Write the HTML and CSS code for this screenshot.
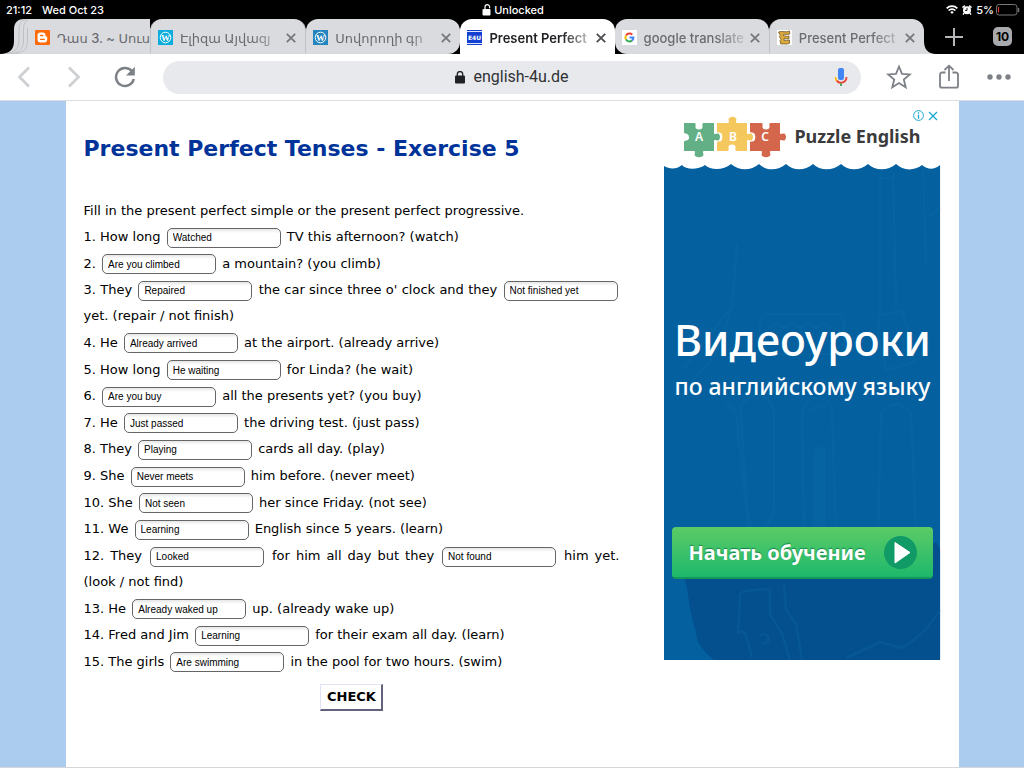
FILE: index.html
```html
<!DOCTYPE html>
<html lang="en">
<head>
<meta charset="utf-8">
<meta name="viewport" content="width=device-width, initial-scale=1">
<title>Present Perfect Tenses - Exercise 5</title>
<link rel="stylesheet" href="styles.css">
</head>
<body>
<div class="status">
  <div class="status-left"><span>21:12</span><span>Wed Oct 23</span></div>
  <div class="status-mid">
    <svg width="9" height="12" viewBox="0 0 9 12"><rect x="0.5" y="5" width="8" height="6.5" rx="1" fill="#fff"/><path d="M3 5V3a2.300 2.300 0 0 1 4.600 0V4.200" fill="none" stroke="#fff" stroke-width="1.2"/></svg>
    <span>Unlocked</span>
  </div>
  <div class="status-right">
    <svg width="12" height="9" viewBox="0 0 12 9"><g fill="none" stroke="#fff" stroke-width="1.6"><path d="M0.6 3.4a7.6 7.6 0 0 1 10.8 0"/><path d="M2.6 5.5a4.8 4.8 0 0 1 6.8 0"/></g><path d="M4.2 7a2.6 2.6 0 0 1 3.6 0L6 9z" fill="#fff"/></svg>
    <svg width="10" height="10" viewBox="0 0 10 10"><circle cx="5" cy="5.2" r="4" fill="#fff"/><path d="M0.5 2.6L2.8.6M9.5 2.6L7.2.6M2 8.2L1 9.6M8 8.2l1 1.4" stroke="#fff" stroke-width="1.4"/><path d="M5 2.8v2.6H3" fill="none" stroke="#000" stroke-width=".9"/></svg>
    <span class="charge">5%</span>
    <svg width="24" height="12" viewBox="0 0 24 12"><rect x=".5" y=".5" width="20.5" height="10.5" rx="2.6" fill="none" stroke="#777"/><path d="M2.5 3v5.5" stroke="#e0392b" stroke-width="1.2"/><path d="M22.5 4v4" stroke="#777" stroke-width="1.4"/></svg>
  </div>
</div>

<div class="strip">
  <svg class="stack" width="28" height="35" viewBox="0 0 28 35"><path d="M0 35C10 35 14 30 14 22V11C14 4 17 0 24 0H28V35z" fill="#dadbdf"/><g fill="none" stroke="#bfc0c4"><path d="M5 35C14 34 19 30 19 22V11C19 5 21 1 26 .5"/><path d="M10 35C19 34 23.500 30 23.500 22V11C23.500 5 25 2 28 1"/><path d="M15 35C23 34 27.500 30 27.500 22V9"/></g></svg>
  <div class="tab tab-first">
    <svg width="15" height="15" viewBox="0 0 15 15"><rect width="15" height="15" rx="1" fill="#ff6a0b"/><path d="M5.500 2.500h2.300a2.700 2.700 0 0 1 2.700 2.700c0 1 .3 1.300 1 1.400.5 0 .7.300.7.700v2.200a3 3 0 0 1-3 3H5.500a3 3 0 0 1-3-3V5.500a3 3 0 0 1 3-3z" fill="#fff"/><path d="M5.500 5.500h2.300M5.500 9.400h3.800" stroke="#ff6a0b" stroke-width="1.300" stroke-linecap="round"/></svg>
    <button class="tab-title">Դաս 3. ~ Սուս</button>
  </div>
  <div class="tab tab-edge">
    <svg width="15" height="15" viewBox="0 0 15 15"><rect width="15" height="15" fill="#0badde"/><circle cx="7.500" cy="7.500" r="5.300" fill="none" stroke="#fff"/><text x="7.500" y="10.500" font-family="Liberation Serif,serif" font-weight="bold" font-size="9" text-anchor="middle" fill="#fff">W</text></svg>
    <button class="tab-title">Էլիզա Այվազյ</button>
    <button class="close" aria-label="Close tab"><svg width="10" height="10" viewBox="0 0 10 10"><path d="M.8.800l8.400 8.400M9.200.800L.8 9.200"/></svg></button>
  </div>
  <div class="tab tab-before">
    <svg width="15" height="15" viewBox="0 0 15 15"><rect width="15" height="15" fill="#2384c0"/><circle cx="7.500" cy="7.500" r="5.300" fill="none" stroke="#fff"/><text x="7.500" y="10.500" font-family="Liberation Serif,serif" font-weight="bold" font-size="9" text-anchor="middle" fill="#fff">W</text></svg>
    <button class="tab-title">Սովորողի գր</button>
    <button class="close" aria-label="Close tab"><svg width="10" height="10" viewBox="0 0 10 10"><path d="M.8.800l8.400 8.400M9.200.800L.8 9.200"/></svg></button>
  </div>
  <div class="tab tab-active">
    <svg width="15" height="15" viewBox="0 0 15 15"><rect width="15" height="15" fill="#1440d2"/><path d="M0 1.500h15M0 13.500h15" stroke="#dfe6fb"/><text x="7.500" y="9.800" font-family="DejaVu Sans,sans-serif" font-weight="bold" font-size="6" text-anchor="middle" fill="#fff">E4U</text></svg>
    <button class="tab-title">Present Perfect</button>
    <button class="close" aria-label="Close tab"><svg width="10" height="10" viewBox="0 0 10 10"><path d="M.8.800l8.400 8.400M9.200.800L.8 9.200"/></svg></button>
  </div>
  <div class="tab tab-after">
    <svg width="15" height="15" viewBox="0 0 15 15"><rect width="15" height="15" fill="#fff"/><g fill="none" stroke-width="2"><path d="M10.300 4.600A4 4 0 0 0 4 5.500" stroke="#ea4335"/><path d="M4 5.500a4 4 0 0 0 0 4" stroke="#fbbc05"/><path d="M4 9.500a4 4 0 0 0 6 1" stroke="#34a853"/><path d="M10 10.500a4 4 0 0 0 1.400-2.900H7.500" stroke="#4285f4"/></g></svg>
    <button class="tab-title">google translate</button>
    <button class="close" aria-label="Close tab"><svg width="10" height="10" viewBox="0 0 10 10"><path d="M.8.800l8.400 8.400M9.200.800L.8 9.200"/></svg></button>
  </div>
  <div class="tab tab-last">
    <svg width="15" height="15" viewBox="0 0 15 15"><rect width="15" height="15" fill="#fff"/><path d="M1.500 2C5 .5 9 3 12.500 1l.3 3C10 5 8 4 6.500 4.500L6.700 6C8.500 5.500 9.500 7 12 6v2.800C9.500 9.500 8.500 8.200 7 8.600l.2 2C9 10 10 11 12.500 10v3.300c-3 1.500-5.500.2-8.700.7L3 10.500l1-1L2.300 6.500l1-1z" fill="#dba93c" stroke="#6d5628" stroke-width=".8"/></svg>
    <button class="tab-title">Present Perfect</button>
    <button class="close" aria-label="Close tab"><svg width="10" height="10" viewBox="0 0 10 10"><path d="M.8.800l8.400 8.400M9.200.800L.8 9.200"/></svg></button>
  </div>
  <svg class="flare" width="12" height="35" viewBox="0 0 12 35"><path d="M0 22C0 30 4 35 12 35H0z" fill="#dadbdf"/></svg>
  <button class="new-tab" aria-label="New tab"><svg width="18" height="18" viewBox="0 0 18 18"><path d="M9 0v18M0 9h18" stroke="#b5b6ba" stroke-width="2"/></svg></button>
  <button class="count">10</button>
</div>

<div class="toolbar">
  <button class="tool" aria-label="Back"><svg width="14" height="22" viewBox="0 0 14 22"><path d="M11 1.500L1.500 11l9.500 9.500" fill="none" stroke="#cfd0d3" stroke-width="2.800"/></svg></button>
  <button class="tool" aria-label="Forward"><svg width="14" height="22" viewBox="0 0 14 22"><path d="M1 1.500L10.500 11 1 20.500" fill="none" stroke="#cfd0d3" stroke-width="2.800"/></svg></button>
  <button class="tool" aria-label="Reload"><svg width="22" height="22" viewBox="0 0 22 22"><path d="M18.500 6A9 9 0 1 0 19.800 13" fill="none" stroke="#7d8187" stroke-width="2.500"/><path d="M20.800.8v8.700H12z" fill="#7d8187"/></svg></button>
  <div class="omnibox">
    <svg width="10" height="13" viewBox="0 0 10 13"><rect y="4.500" width="10" height="8" rx="1" fill="#202124"/><path d="M2.300 5V3.300a2.700 2.700 0 0 1 5.400 0V5" fill="none" stroke="#202124" stroke-width="1.300"/></svg>
    <input class="url" type="text" size="10" value="english-4u.de" aria-label="Address">
    <button class="mic" aria-label="Voice search"><svg width="14" height="20" viewBox="0 0 14 20"><rect x="4" y="1" width="6" height="12" rx="2" fill="#4285f4"/><path d="M1.500 10a5.500 5.500 0 0 0 1.500 4" fill="none" stroke="#fbbc05" stroke-width="1.800"/><path d="M2.700 13.600a5.500 5.500 0 0 0 9.800-3.600" fill="none" stroke="#ea4335" stroke-width="1.800"/><path d="M7 16.400V19" stroke="#34a853" stroke-width="1.800"/></svg></button>
  </div>
  <button class="tool" aria-label="Bookmark"><svg width="26" height="26" viewBox="0 0 26 26"><path d="M13 2.500l3 7.300 7.800.6-6 5.100 1.900 7.700-6.700-4.200-6.700 4.200 1.900-7.700-6-5.100 7.800-.6z" fill="none" stroke="#7d8187" stroke-width="1.800"/></svg></button>
  <button class="tool" aria-label="Share"><svg width="22" height="26" viewBox="0 0 22 26"><g fill="none" stroke="#7d8187" stroke-width="1.800"><path d="M7.500 8.500H4A2 2 0 0 0 2 10.500v11.200a2 2 0 0 0 2 2h14a2 2 0 0 0 2-2V10.500a2 2 0 0 0-2-2h-3.500M11 17V2M6.500 6L11 1.700 15.500 6"/></g></svg></button>
  <button class="tool" aria-label="Menu"><svg width="26" height="6" viewBox="0 0 26 6"><g fill="#7d8187"><circle cx="4" cy="3" r="2.700"/><circle cx="13" cy="3" r="2.700"/><circle cx="22" cy="3" r="2.700"/></g></svg></button>
</div>

<div class="page">
<main class="sheet">
  <form class="exercise">
    <h1>Present Perfect Tenses - Exercise 5</h1>
    <p class="intro">Fill in the present perfect simple or the present perfect progressive.</p>
    <div class="items">
      <p>1. How long <input type="text" aria-label="1" value="Watched"> TV this afternoon? (watch)</p>
      <p>2. <input type="text" aria-label="2" value="Are you climbed"> a mountain? (you climb)</p>
      <p>3. They <input type="text" aria-label="3a" value="Repaired"> the car since three o' clock and they <input type="text" aria-label="3b" value="Not finished yet"> yet. (repair / not finish)</p>
      <p>4. He <input type="text" aria-label="4" value="Already arrived"> at the airport. (already arrive)</p>
      <p>5. How long <input type="text" aria-label="5" value="He waiting"> for Linda? (he wait)</p>
      <p>6. <input type="text" aria-label="6" value="Are you buy"> all the presents yet? (you buy)</p>
      <p>7. He <input type="text" aria-label="7" value="Just passed"> the driving test. (just pass)</p>
      <p>8. They <input type="text" aria-label="8" value="Playing"> cards all day. (play)</p>
      <p>9. She <input type="text" aria-label="9" value="Never meets"> him before. (never meet)</p>
      <p>10. She <input type="text" aria-label="10" value="Not seen"> her since Friday. (not see)</p>
      <p>11. We <input type="text" aria-label="11" value="Learning"> English since 5 years. (learn)</p>
      <p>12. They <input type="text" aria-label="12a" value="Looked"> for him all day but they <input type="text" aria-label="12b" value="Not found"> him yet. (look / not find)</p>
      <p>13. He <input type="text" aria-label="13" value="Already waked up"> up. (already wake up)</p>
      <p>14. Fred and Jim <input type="text" aria-label="14" value="Learning"> for their exam all day. (learn)</p>
      <p>15. The girls <input type="text" aria-label="15" value="Are swimming"> in the pool for two hours. (swim)</p>
    </div>
    <button class="check" type="button">CHECK</button>
  </form>

  <aside class="ad">
    <div class="ad-marks">
      <svg width="11" height="11" viewBox="0 0 11 11"><circle cx="5.500" cy="5.500" r="4.900" fill="none" stroke="#1aa7d0"/><path d="M5.500 2.300v1.400M5.500 4.700v4" stroke="#1aa7d0" stroke-width="1.300"/></svg>
      <svg width="10" height="10" viewBox="0 0 10 10"><path d="M1 1l8 8M9 1L1 9" stroke="#1aa7d0" stroke-width="1.300"/></svg>
    </div>
    <div class="brand">
      <svg width="102" height="42" viewBox="0 0 102 42">
        <path d="M0 7H10.500C13 8 10.500 11 12 12.500C13.500 13.800 16.500 13.800 18 12.500C19.500 11 17 8 19.500 7H30V17.500C31.500 19 33 16.500 35 18Q37 21 35 24C33 25.500 31.500 23 30 24.500V35H19.500C18 36.500 20.500 38 18.800 40Q15 42.500 11.200 40C9.500 38 12 36.500 10.500 35H0V25.500C2 24 4 25 5 22.500Q5.500 19 3 17.800Q1 18 0 16.500z" fill="#63b087"/>
        <path d="M33 7H44.500C46 5.500 43.500 4 45.200 2Q48.500-.5 51.800 2C53.500 4 51 5.500 52.500 7H63V17.500C64.500 19 66 16.500 68 18Q70 21 68 24C66 25.500 64.500 23 63 24.500V35H52.500C50 34 52.500 31 51 29.500C49.500 28.200 46.500 28.200 45 29.500C43.500 31 46 34 43.500 35H33V26C35 25 37 26 38 23.500Q39 19 37 17Q34.500 16.500 33 16z" fill="#f5c85e"/>
        <path d="M66 7H77.500C80 8 77.500 11 79 12.500C80.500 13.800 83.500 13.800 85 12.500C86.500 11 84 8 86.500 7H96V17.500C97.500 19 99 16.500 101 18Q103 21 101 24C99 25.500 97.500 23 96 24.500V35H86.500C85 36.500 87.500 38 85.800 40Q82 42.500 78.200 40C76.500 38 79 36.500 77.500 35H66V26C68 25 70 26 71 23.500Q72 19 70 17Q67.500 16.500 66 16z" fill="#d3664b"/>
        <g fill="#fff" font-family="Noto Sans,sans-serif" font-weight="600" font-size="12" text-anchor="middle"><text x="15" y="25">A</text><text x="49" y="25">B</text><text x="81" y="25">C</text></g>
      </svg>
      <span>Puzzle English</span>
    </div>
    <div class="poster">
      <svg class="poster-art" viewBox="0 0 276 496" preserveAspectRatio="none">
        <path d="M0 2C5 5 12 6 18 1C22 6 34 6 41 1C46 6 59 7 67 0C75 7 87 7 95 0C102 7 114 7 122 0C129 7 141 7 149 0C156 7 169 7 177 0C184 7 196 7 204 0C211 7 224 7 232 0C239 7 250 7 258 1C264 6 270 6 276 1V496H0z" fill="#04609f"/>
        <path d="M276 385L272 378 240 400H18Q22 420 24 430Q26 450 32 468Q32 482 50 496H276z" fill="#04508f"/>
        <g fill="none" stroke="#1272ab" stroke-width="2.500" opacity=".22" stroke-linejoin="round">
          <path d="M216 8V150M229 8L232 144M214 14H229M259 4L262 100M276 44L266 52M73 80L68 143 50 165 20 205M68 143L52 190 26 220M215 151L238 147 243 163 251 198 222 206 214 171z"/>
          <path d="M107 150H172a8 8 0 0 1 8 8V182a8 8 0 0 1-8 8H104a8 8 0 0 1-8-8V158a10 10 0 0 1 11-8zM104 164q8-8 16 0q8-8 16 0q8-8 16 0q8-8 16 0M224 192v-15M232 190v-15M240 188v-15"/>
          <path d="M62 238L72 248 85 370M76 242Q98 218 110 246V345Q104 365 94 370Q86 366 84 350L76 242M140 370L138 250Q142 234 154 234Q168 234 168 250L172 370M146 246L164 240M214 370L217 250Q232 230 247 250L252 370"/>
          <path d="M74 470L76 430Q78 426 106 425M74 470Q80 462 84 478L88 494M96 472a5 5 0 0 1 8 0Q106 480 98 480M106 425V450L118 470 126 496M120 420L122 446 132 460 138 496M182 494L216 478 238 484Q262 470 276 446"/>
        </g>
        <path d="M150 284L162 282V370H148z" fill="#1272ab" opacity=".22"/>
      </svg>
      <h2>Видеоуроки</h2>
      <p>по английскому языку</p>
      <button class="start"><span>Начать обучение</span>
        <svg width="33" height="33" viewBox="0 0 33 33"><circle cx="16.500" cy="16.500" r="16.500" fill="#109a66"/><path d="M11 6.500L26 16.500 11 27z" fill="#fff" stroke="#fff" stroke-linejoin="round"/></svg>
      </button>
    </div>
  </aside>
</main>
</div>
</body>
</html>
```

FILE: styles.css
```css
* { box-sizing: border-box; }
body {
  margin: 0;
  min-height: 100vh;
  display: flex;
  flex-direction: column;
  background: #fff;
  color: #000;
  font-family: "DejaVu Sans", sans-serif;
}
button { border: 0; margin: 0; padding: 0; background: none; color: inherit; font: inherit; }
svg { flex: none; display: block; }

.status {
  display: grid;
  grid-template-columns: 1fr auto 1fr;
  align-items: center;
  height: 19px;
  padding: 0 4px 0 6px;
  background: #000;
  color: #fff;
  font: 500 11px/18px Inter, sans-serif;
}
.status-left { display: flex; gap: 10px; }
.status-mid { display: flex; align-items: center; gap: 3px; }
.status-right { display: flex; align-items: center; justify-content: flex-end; gap: 4px; }
.charge { margin-right: -2px; }

.strip { display: flex; height: 35px; background: #000; color: #6a6b6f; font: 500 13px/18px Inter, "DejaVu Sans", sans-serif; }
.tab {
  flex: 1 1 0;
  min-width: 0;
  display: flex;
  align-items: center;
  gap: 7px;
  padding: 2px 4px 0 7px;
  background: #dadbdf;
  border-radius: 12px 12px 0 0;
}
.tab-first { flex: 0 1 122px; padding-right: 0; border-radius: 0; }
.tab-edge { border-left: 1px solid #c2c3c7; border-right: 1px solid #c2c3c7; }
.tab-before { border-radius: 12px 12px 12px 0; background: #dadbdf; }
.tab-after { border-radius: 12px 12px 0 12px; }
.tab-active { background: #fff; color: #202124; }
.tab-last { border-left: 1px solid #c2c3c7; }
.tab-title {
  flex: 1;
  min-width: 0;
  overflow: hidden;
  text-align: left;
  white-space: nowrap;
  mask-image: linear-gradient(to right, #000 72%, rgb(0 0 0 / 20%));
}
.tab-first .tab-title { mask-image: none; }
.tab-active .tab-title { font-weight: 600; }
.close { flex: none; margin-left: -7px; padding: 5px; stroke: #77787c; stroke-width: 1.8; }
.tab-active .close { stroke: #4c4d51; }
.new-tab { flex: none; width: 36px; display: grid; place-items: center; }
.count {
  align-self: center;
  width: 19px;
  height: 19px;
  margin: 0 12px 0 21px;
  border-radius: 5px;
  background: #a9aaad;
  color: #000;
  font: 700 12px/19px Inter, sans-serif;
}

.toolbar { display: flex; align-items: center; height: 47px; border-bottom: 1px solid #dcdde0; }
.tool { flex: none; width: 50px; height: 44px; display: grid; place-items: center; }
.omnibox {
  position: relative;
  flex: 1;
  display: flex;
  align-items: center;
  justify-content: center;
  gap: 8px;
  height: 33px;
  margin: 0 13px;
  border-radius: 17px;
  background: #e8e9ed;
}
.url {
  field-sizing: content;
  border: 0;
  padding: 0;
  background: none;
  color: #303134;
  font: 400 16px/20px Roboto, sans-serif;
}
.mic { position: absolute; right: 13px; }

.page { flex: 1; display: flex; background: #abccee; border-bottom: 1px solid #d5d6da; }
.sheet {
  flex: 1;
  display: flex;
  justify-content: space-between;
  align-items: flex-start;
  max-width: 893px;
  margin: 0 auto;
  padding: 0 18px;
  background: #fff;
}
.exercise { flex: 0 1 536px; display: flex; flex-direction: column; font-size: 13px; line-height: 26px; }
h1 { margin: 33px 0 0; color: #039; font-size: 22px; line-height: 30px; white-space: nowrap; }
.intro { margin: 34px 0 0; }
.items { display: flex; flex-direction: column; justify-content: space-between; min-height: 451px; text-align: justify; }
.items p { margin: 0; }
.items input {
  width: 114px;
  height: 20px;
  margin: 0 2px;
  padding: 0 5px;
  vertical-align: middle;
  border: 1px solid #666;
  border-radius: 5px;
  background: linear-gradient(#e6e6e6, #fff 4px);
  color: #000;
  font: 10px/14px "Liberation Sans", sans-serif;
}
.check {
  align-self: center;
  margin-top: 9px;
  padding: 3px 5px 3px 6px;
  border: 1px solid #dfe3f3;
  border-right: 2px solid #62627c;
  border-bottom: 2px solid #62627c;
  background: #fff;
  font-size: 13px;
  font-weight: 700;
  line-height: 18px;
}

.ad { flex: 0 0 276px; display: flex; flex-direction: column; padding-top: 9px; }
.ad-marks { display: flex; gap: 4px; align-items: center; justify-content: flex-end; height: 11px; padding-right: 3px; }
.brand { display: flex; align-items: center; gap: 8px; height: 43px; margin-top: -6px; padding: 0 20px; color: #3b3b3d; font: 700 18px/24px "Noto Sans", sans-serif; white-space: nowrap; }
.brand span { line-height: 20px; padding-bottom: 2px; }
.poster {
  position: relative;
  display: flex;
  flex-direction: column;
  align-items: center;
  min-height: 496px;
  margin-top: 6px;
  padding: 0 8px;
  color: #fff;
  font-family: "Noto Sans", sans-serif;
  white-space: nowrap;
}
.poster-art { position: absolute; inset: 0; width: 100%; height: 100%; }
.poster h2 { position: relative; margin: 146px 0 0; font-size: 43px; line-height: 60px; font-weight: 500; }
.poster p { position: relative; margin: 0; font-size: 23px; font-weight: 500; line-height: 32px; }
.start {
  position: relative;
  display: flex;
  align-items: center;
  justify-content: space-between;
  align-self: stretch;
  height: 52px;
  margin-top: 125px;
  padding: 0 16px;
  border-radius: 4px;
  border-bottom: 2px solid #14975b;
  background: linear-gradient(#5ccb66, #1db86c);
  font-size: 20px;
  font-weight: 700;
  text-shadow: 0 -1px 1px #14844c;
}
```
